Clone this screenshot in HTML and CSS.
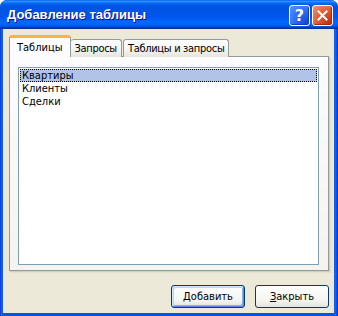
FILE: index.html
```html
<!DOCTYPE html>
<html lang="ru">
<head>
  <meta charset="UTF-8" />
  <title>Добавление таблицы</title>
  <link rel="stylesheet" href="styles.css">
</head>
<body>
  <div class="window">
    <div class="titlebar">
      <span class="title">Добавление таблицы</span>
      <div class="controls">
        <div class="ctl help">?</div>
        <div class="ctl close">
          <svg width="11" height="11" viewBox="0 0 11 11">
            <path d="M1.5 1.5 L9.5 9.5 M9.5 1.5 L1.5 9.5" stroke="#fff" stroke-width="2" stroke-linecap="square" />
          </svg>
        </div>
      </div>
    </div>

    <div class="client">
      <div class="tabs">
        <div class="tab active">Таблицы</div>
        <div class="tab">Запросы</div>
        <div class="tab">Таблицы и запросы</div>
      </div>

      <div class="panel">
        <div class="listbox">
          <div class="item selected">Квартиры</div>
          <div class="item">Клиенты</div>
          <div class="item">Сделки</div>
        </div>
      </div>

      <div class="actions">
        <button class="btn default"><u>Д</u>обавить</button>
        <button class="btn"><u>З</u>акрыть</button>
      </div>
    </div>
  </div>
</body>
</html>
```

FILE: styles.css
```css
body {
  margin: 0;
  background: #fff;
  font-family: 'DejaVu Sans Condensed', 'Liberation Sans', Arial, sans-serif;
  font-size: 11px;
  color: #000;
}
.window {
  width: 338px;
  height: 316px;
  display: flex;
  flex-direction: column;
  background: linear-gradient(to right, #0831d9 0, #166aee 2px, #0855dd 3px, #0855dd 334px, #166aee 335px, #0831d9 338px);
  border-radius: 7px 7px 0 0;
  overflow: hidden;
}
.titlebar {
  height: 29px;
  box-sizing: border-box;
  padding: 5px 5px 0 7px;
  display: flex;
  align-items: flex-start;
  justify-content: space-between;
  background: linear-gradient(#0058ee 0%, #3593ff 4%, #288eff 6%, #127dff 8%, #036ffc 10%, #0262ee 14%, #0057e5 20%, #0054e3 24%, #0055eb 56%, #005bf5 66%, #026afe 76%, #0062ef 86%, #0052d6 92%, #0040ab 94%, #003092 100%);
}
.title {
  line-height: 20px;
  font-family: 'Liberation Sans', Arial, sans-serif;
  font-size: 13px;
  font-weight: bold;
  color: #fff;
  text-shadow: 1px 1px #0f1089;
}
.controls {
  display: flex;
  gap: 2px;
}
.ctl {
  width: 21px;
  height: 21px;
  box-sizing: border-box;
  border: 1px solid #fff;
  border-radius: 3px;
  display: flex;
  align-items: center;
  justify-content: center;
  color: #fff;
  font-weight: bold;
  font-size: 16px;
  font-family: 'DejaVu Sans', sans-serif;
}
.help {
  background: radial-gradient(circle at 85% 85%, #1b48d7 0, #2e6ef5 50%, #5a94ff 100%);
  box-shadow: inset -1px -1px 1px #1537b8;
}
.close {
  background: radial-gradient(circle at 85% 85%, #c23411 0, #e15a32 50%, #ef9478 100%);
  box-shadow: inset -1px -1px 1px #a3260c;
}
.client {
  flex: 1;
  margin: 0 4px 3px 3px;
  background: #ece9d8;
  display: flex;
  flex-direction: column;
}
.tabs {
  display: flex;
  align-items: flex-end;
  padding: 7px 0 0 6px;
  height: 21px;
  position: relative;
  z-index: 1;
}
.tab {
  height: 17px;
  line-height: 17px;
  padding: 0 4px;
  letter-spacing: -0.3px;
  border: 1px solid #919b9c;
  border-bottom: none;
  border-radius: 3px 3px 0 0;
  background: linear-gradient(#fff, #f3f3ef 60%, #e6e5dc);
  margin-right: 1px;
}
.tab.active {
  height: 19px;
  line-height: 19px;
  padding: 0 7px;
  letter-spacing: 0;
  border-top: 3px solid #f7b53b;
  border-color: #f7b53b #919b9c #fcfcfe #919b9c;
  background: #fcfcfe;
  margin-right: 0;
}
.tab.active + .tab {
  border-left: none;
}
.panel {
  margin: -1px 5px 0 6px;
  height: 215px;
  box-sizing: border-box;
  border: 1px solid #919b9c;
  background: linear-gradient(#fcfcfe, #f4f3ee);
  box-shadow: 1px 1px #d0cebf, 2px 2px #e3e0d0;
  padding: 10px 9px 5px 8px;
  display: flex;
  flex-direction: column;
}
.listbox {
  flex: 1;
  border: 1px solid #7f9db9;
  background: #fff;
  padding: 1px;
}
.item {
  height: 13px;
  line-height: 13px;
  padding-left: 2px;
}
.item.selected {
  background: #b1c4e7;
  outline: 1px dotted #000;
  outline-offset: -1px;
}
.actions {
  display: flex;
  justify-content: flex-end;
  gap: 10px;
  margin-top: 14px;
  padding-right: 5px;
}
.btn {
  width: 74px;
  height: 23px;
  border: 1px solid #003c74;
  border-radius: 3px;
  background: linear-gradient(#fff, #f4f4f0 70%, #e3e2da);
  font-family: 'DejaVu Sans Condensed', 'Liberation Sans', Arial, sans-serif;
  font-size: 11px;
  color: #000;
  padding: 0;
}
.btn.default {
  box-shadow: inset 1px 1px #cee7ff, inset -1px -1px #6982ee, inset 2px 2px #bcd4f6, inset -2px -2px #89ade4;
}
```
